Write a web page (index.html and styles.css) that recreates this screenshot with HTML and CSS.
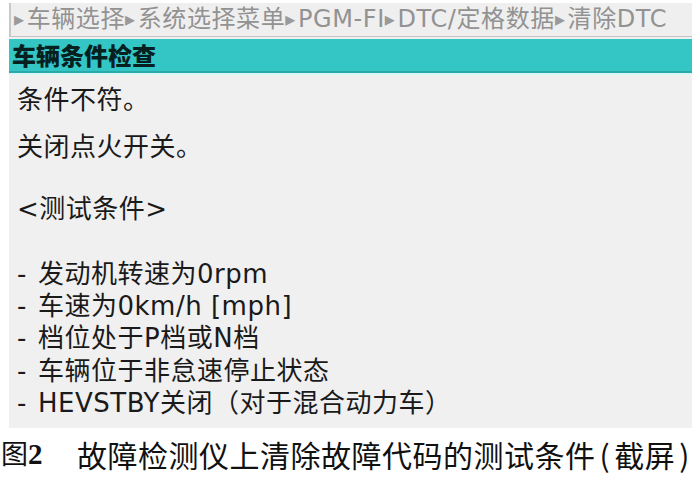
FILE: index.html
```html
<!DOCTYPE html>
<html lang="zh-CN">
<head>
<meta charset="utf-8">
<link rel="stylesheet" href="styles.css">
</head>
<body>
<div class="panel">
  <div class="crumbs"><span class="tri">▸</span>车辆选择<span class="tri">▸</span>系统选择菜单<span class="tri">▸</span>PGM-FI<span class="tri">▸</span>DTC/定格数据<span class="tri">▸</span>清除DTC</div>
  <div class="title">车辆条件检查</div>
  <div class="content">
    <p class="line l1">条件不符。</p>
    <p class="line l2">关闭点火开关。</p>
    <p class="line l3">&lt;测试条件&gt;</p>
    <ul class="list">
      <li><span class="dash">-</span>发动机转速为0rpm</li>
      <li><span class="dash">-</span>车速为0km/h [mph]</li>
      <li><span class="dash">-</span>档位处于P档或N档</li>
      <li><span class="dash">-</span>车辆位于非怠速停止状态</li>
      <li><span class="dash">-</span>HEVSTBY关闭（对于混合动力车）</li>
    </ul>
  </div>
</div>
<div class="caption"><span class="fig">图<b>2</b></span><span class="cap-text">故障检测仪上清除故障代码的测试条件<span class="par">(</span>截屏<span class="par">)</span></span></div>
</body>
</html>
```

FILE: styles.css
```css
html, body {
  margin: 0;
  padding: 0;
  background: #ffffff;
  width: 696px;
  height: 493px;
  overflow: hidden;
}

.panel {
  margin: 3px 0 0 9px;
  width: 683px;
  height: 425px;
  background: #f0f0f0;
  display: flex;
  flex-direction: column;
}

.crumbs {
  height: 34px;
  box-sizing: border-box;
  border-left: 2px solid #c9c9c9;
  border-bottom: 1px solid #c4c4c4;
  background: #efefef;
  color: #929292;
  font-family: "DejaVu Sans", "Noto Sans CJK SC", sans-serif;
  font-size: 24px;
  line-height: 33px;
  padding-left: 3px;
  white-space: nowrap;
  letter-spacing: 0.6px;
}

.tri {
  font-size: 20px;
  vertical-align: 1px;
  margin: 0 2px 0 0;
  color: #9a9a9a;
}

.title {
  margin-top: 2px;
  height: 34px;
  box-sizing: border-box;
  background: #34c6c5;
  border-bottom: 2px solid #2aa9a8;
  box-shadow: 0 2px 0 #d8f6f6;
  color: #06201f;
  font-family: "Noto Sans CJK SC", sans-serif;
  font-weight: 900;
  font-size: 24px;
  line-height: 32px;
  padding-left: 3px;
}

.content {
  padding-left: 8px;
  color: #1a1a1a;
  font-family: "DejaVu Sans", "Noto Sans CJK SC", sans-serif;
  font-size: 26px;
  letter-spacing: 0.5px;
}

.line {
  margin: 0;
  line-height: 32px;
}

.l1 { margin-top: 11px; }
.l2 { margin-top: 15px; }
.l3 { margin-top: 30px; }

.list {
  list-style: none;
  margin: 33px 0 0 0;
  padding: 0;
}

.list li {
  line-height: 32.2px;
}

.dash {
  display: inline-block;
  width: 21px;
}

.caption {
  margin-top: 8px;
  display: flex;
  align-items: center;
  white-space: nowrap;
  color: #111;
  font-family: "Noto Sans CJK SC", sans-serif;
  font-size: 30px;
  line-height: 34px;
  padding-left: 1px;
}

.fig {
  width: 76px;
  font-size: 27px;
}

.fig b {
  font-family: "Liberation Serif", serif;
  font-weight: 700;
  font-size: 29px;
}

.cap-text {
  letter-spacing: 0.5px;
}

.par {
  margin: 0 4px;
}
```
